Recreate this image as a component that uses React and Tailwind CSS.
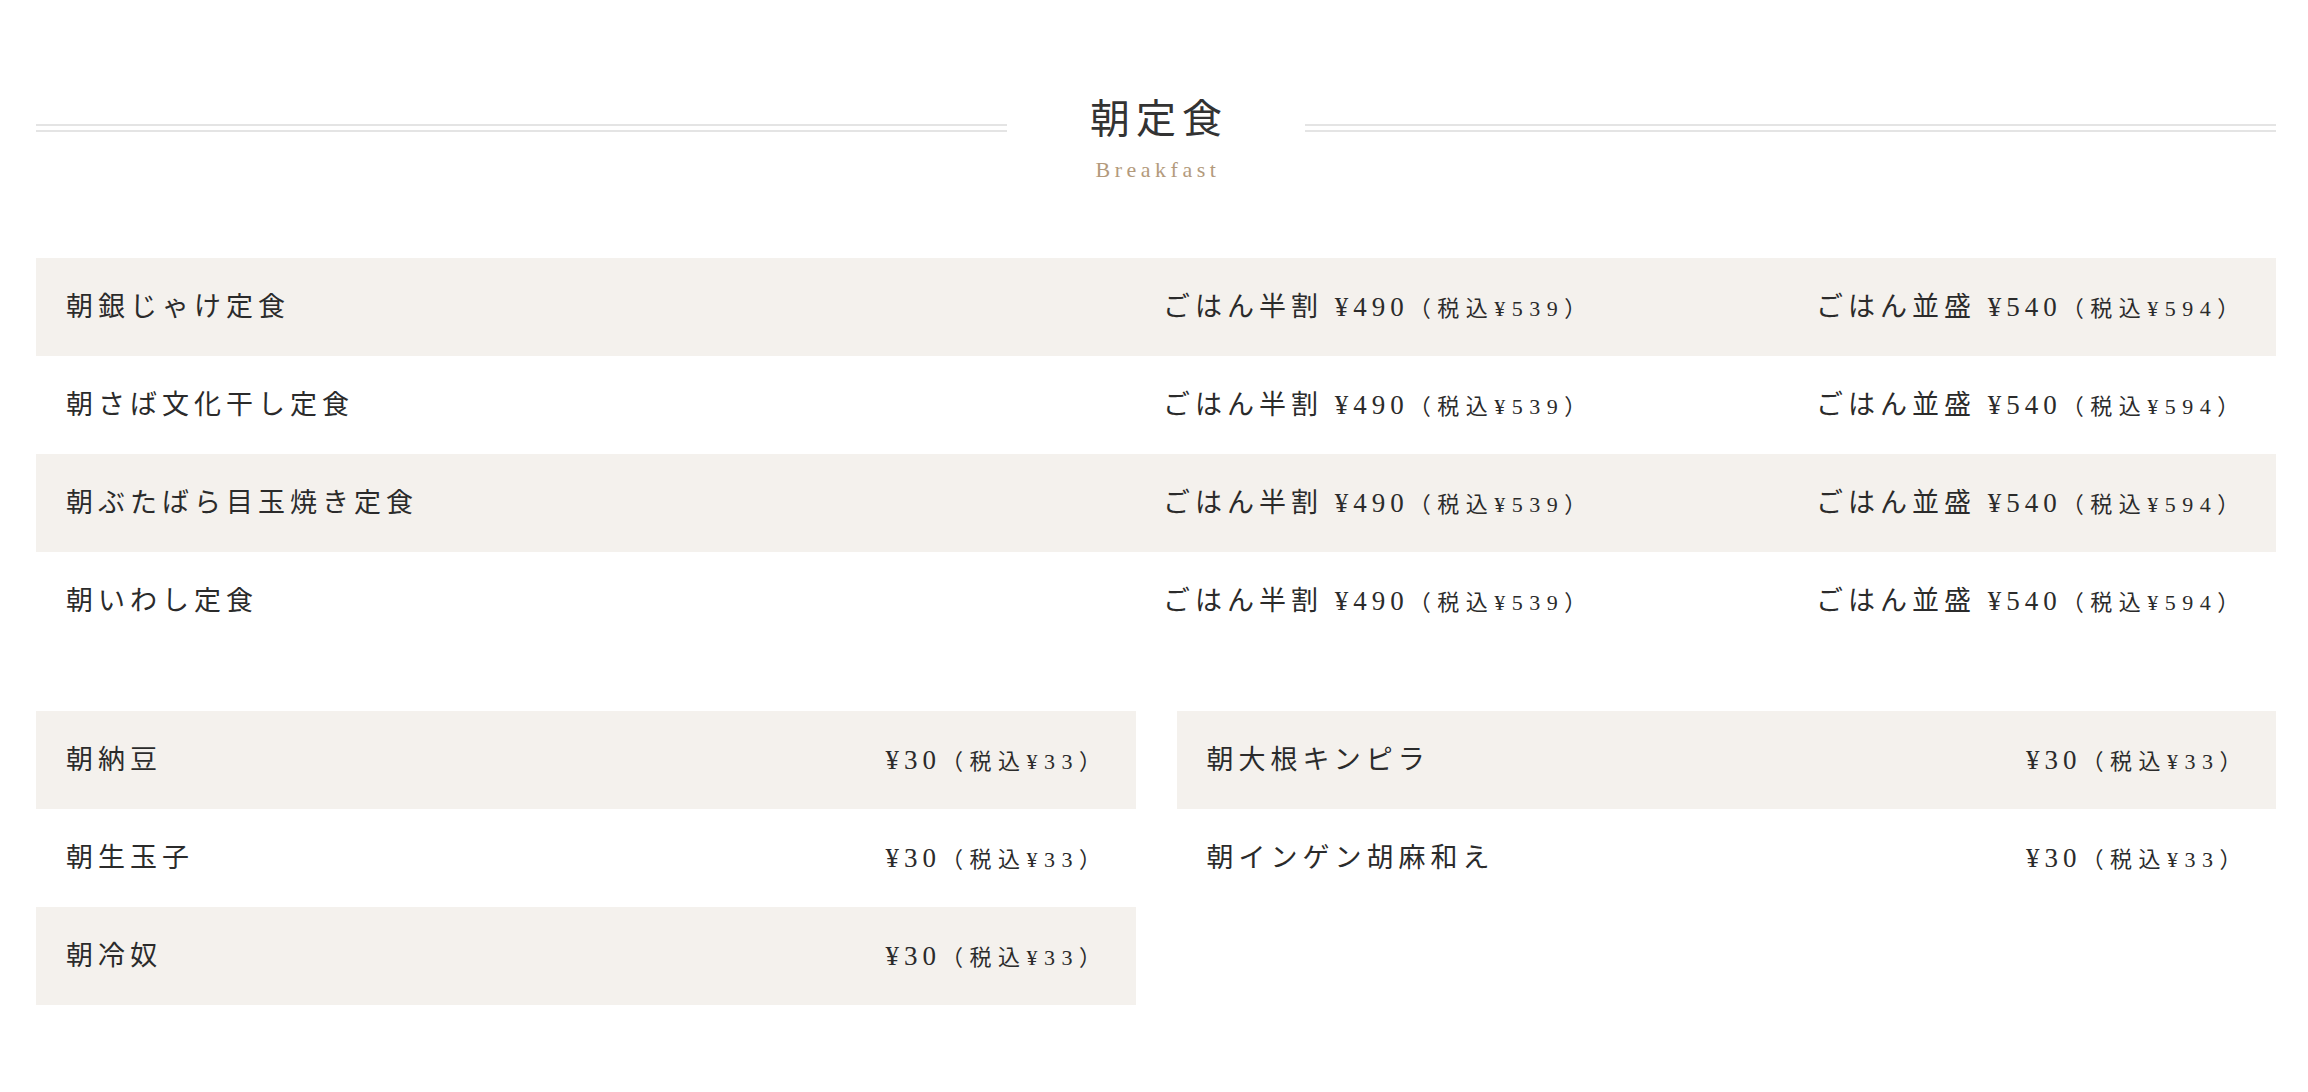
const font = { fontFamily: '"Liberation Serif", "Noto Sans CJK JP", serif' };

const setMenus = [
  { name: '朝銀じゃけ定食', half: ['¥490', '¥539'], full: ['¥540', '¥594'] },
  { name: '朝さば文化干し定食', half: ['¥490', '¥539'], full: ['¥540', '¥594'] },
  { name: '朝ぶたばら目玉焼き定食', half: ['¥490', '¥539'], full: ['¥540', '¥594'] },
  { name: '朝いわし定食', half: ['¥490', '¥539'], full: ['¥540', '¥594'] },
];

const leftSides = ['朝納豆', '朝生玉子', '朝冷奴'];
const rightSides = ['朝大根キンピラ', '朝インゲン胡麻和え'];

const Price = ({ label, price, tax }) => (
  <span className="whitespace-nowrap">
    {label && <>{label} </>}
    {price}
    <span className="text-[22px] tracking-[6.5px]">（税込{tax}）</span>
  </span>
);

const SideList = ({ items }) => (
  <div className="flex flex-col">
    {items.map((item, i) => (
      <div
        key={item}
        className={`flex items-center justify-between h-[98px] pl-[30px] pr-[28px] ${i % 2 === 0 ? 'bg-[#f4f1ed]' : 'bg-white'}`}
      >
        <span>{item}</span>
        <Price price="¥30" tax="¥33" />
      </div>
    ))}
  </div>
);

export default function App() {
  return (
    <div
      style={font}
      className="min-h-screen bg-white pl-[36px] pr-[32px] pt-[90px] pb-[80px] text-[#2b2b2b] text-[27px] tracking-[5px]"
    >
      {/* Heading */}
      <div className="flex items-center">
        <div className="flex-1 h-[8px] mt-[16px] border-y-2 border-[#e4e4e4]" />
        <div className="w-[298px] text-center pl-[6px] text-[40px] leading-[60px] tracking-[6px] text-[#333]">
          朝定食
        </div>
        <div className="flex-1 h-[8px] mt-[16px] border-y-2 border-[#e4e4e4]" />
      </div>
      <div className="text-center mt-[5px] pl-[4px] text-[22px] leading-[30px] tracking-[4.5px] text-[#b39a7c]">
        Breakfast
      </div>

      {/* Set menus */}
      <div className="mt-[73px] flex flex-col">
        {setMenus.map((m, i) => (
          <div
            key={m.name}
            className={`grid grid-cols-[1097px_653px_1fr] items-center h-[98px] pl-[30px] ${i % 2 === 0 ? 'bg-[#f4f1ed]' : 'bg-white'}`}
          >
            <span>{m.name}</span>
            <Price label="ごはん半割" price={m.half[0]} tax={m.half[1]} />
            <Price label="ごはん並盛" price={m.full[0]} tax={m.full[1]} />
          </div>
        ))}
      </div>

      {/* Side dishes */}
      <div className="mt-[61px] grid grid-cols-2 gap-x-[41px] items-start">
        <SideList items={leftSides} />
        <SideList items={rightSides} />
      </div>
    </div>
  );
}
